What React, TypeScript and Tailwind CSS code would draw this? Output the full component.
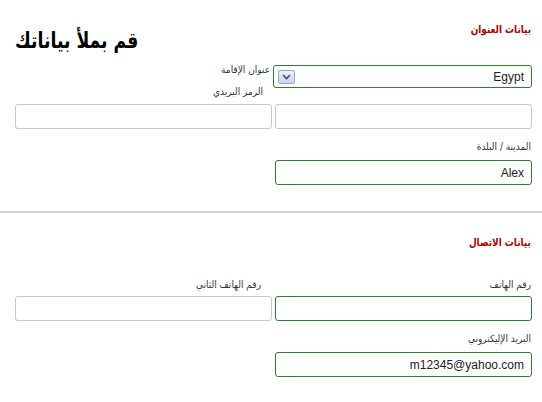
import React from "react";

const AR = "font-['DejaVu_Sans_Condensed','DejaVu_Sans',sans-serif]";

function Input({ value, green }: { value?: string; green?: boolean }) {
  return (
    <div
      className={`h-[25px] w-full rounded-[3px] border bg-white flex items-center justify-start pr-[7px] text-[12px] text-[#222] font-['Liberation_Sans',Arial,sans-serif] ${
        green ? "border-[#2f7d2f]" : "border-[#c8c8c8]"
      }`}
    >
      <span dir="ltr">{value}</span>
    </div>
  );
}

function Label({ children, className = "" }: { children: React.ReactNode; className?: string }) {
  return (
    <div className={`${AR} text-[10px] leading-[14px] text-[#333] ${className}`}>{children}</div>
  );
}

function Section({ children, className = "" }: { children: React.ReactNode; className?: string }) {
  return (
    <div className={`${AR} pr-[1px] text-[11px] leading-[16px] font-bold text-[#b30000] ${className}`}>
      <span className="inline-block scale-x-[0.9] origin-right">{children}</span>
    </div>
  );
}

export default function App() {
  return (
    <div dir="rtl" className="w-[542px] h-[402px] bg-white overflow-hidden">
      <div className="pr-[10px] pl-[15px]">
        {/* Row A */}
        <div className="grid grid-cols-[257px_257px] gap-x-[3px] h-[62px]">
          <Section className="mt-[22px]">بيانات العنوان</Section>
          <div className={`${AR} mt-[24px] text-left text-[22px] leading-[34px] font-bold text-black`}>
            <span dir="rtl" className="inline-block scale-x-[0.87] origin-left">قم بملأ بياناتك</span>
          </div>
        </div>
        {/* Row B */}
        <div className="grid grid-cols-[257px_257px] gap-x-[3px] h-[42px]">
          <div className="pt-[3px] pl-0 -ml-[2px]">
            <div className="h-[23px] rounded-[3px] border border-[#2f7d2f] bg-white flex items-center justify-between pr-[7px] pl-[4px]">
              <span className="text-[12px] text-[#222] font-['Liberation_Sans',Arial,sans-serif]" dir="ltr">
                Egypt
              </span>
              <div className="w-[17px] h-[14px] rounded-[2px] border border-[#98a9c4] bg-gradient-to-b from-[#eef2fa] to-[#c9d5ea] flex items-center justify-center">
                <svg width="9" height="6" viewBox="0 0 9 6">
                  <path d="M1 1 L4.5 4.5 L8 1" fill="none" stroke="#3c4e74" strokeWidth="1.6" />
                </svg>
              </div>
            </div>
          </div>
          <div className="pr-[2px]">
            <Label className="mt-[1px]">عنوان الإقامة</Label>
            <Label className="mt-[8px] pr-[7px]">الرمز البريدي</Label>
          </div>
        </div>
        {/* Row C */}
        <div className="grid grid-cols-[257px_257px] gap-x-[3px]">
          <Input />
          <Input />
        </div>
        {/* Row D */}
        <Label className="mt-[11px] pr-[1px]">المدينة / البلدة</Label>
        <div className="grid grid-cols-[257px_257px] gap-x-[3px] mt-[6px]">
          <Input value="Alex" green />
          <div />
        </div>
      </div>

      <div className="mt-[26px] h-[2px] bg-[#cfcfcf] w-full" />

      <div className="pr-[10px] pl-[15px]">
        <Section className="mt-[22px]">بيانات الاتصال</Section>
        <div className="grid grid-cols-[257px_257px] gap-x-[3px] mt-[27px]">
          <Label className="pr-[1px]">رقم الهاتف</Label>
          <Label className="pr-[11px]">رقم الهاتف الثاني</Label>
        </div>
        <div className="grid grid-cols-[257px_257px] gap-x-[3px] mt-[4px]">
          <Input green />
          <Input />
        </div>
        <Label className="mt-[11px] pr-[1px]">البريد الإليكتروني</Label>
        <div className="grid grid-cols-[257px_257px] gap-x-[3px] mt-[6px]">
          <Input value="m12345@yahoo.com" green />
          <div />
        </div>
      </div>
    </div>
  );
}
